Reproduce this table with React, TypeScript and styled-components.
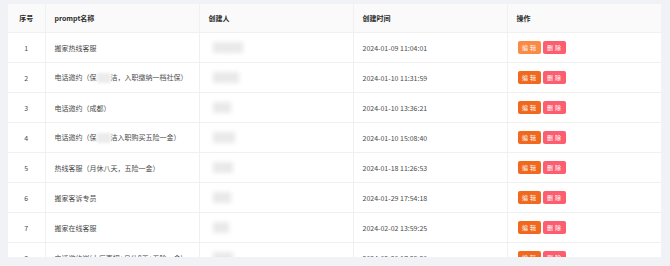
import styled, { createGlobalStyle } from "styled-components";

interface PromptRow {
  id: number;
  name: string;
  redactAt?: number;
  createdAt: string;
  creatorWidth: number;
}

const rows: PromptRow[] = [
  { id: 1, name: "搬家热线客服", createdAt: "2024-01-09 11:04:01", creatorWidth: 30 },
  { id: 2, name: "电话邀约（保洁，入职缴纳一档社保）", redactAt: 6, createdAt: "2024-01-10 11:31:59", creatorWidth: 26 },
  { id: 3, name: "电话邀约（成都）", createdAt: "2024-01-10 13:36:21", creatorWidth: 18 },
  { id: 4, name: "电话邀约（保洁入职购买五险一金）", redactAt: 6, createdAt: "2024-01-10 15:08:40", creatorWidth: 22 },
  { id: 5, name: "热线客服（月休八天，五险一金）", createdAt: "2024-01-18 11:26:53", creatorWidth: 20 },
  { id: 6, name: "搬家客诉专员", createdAt: "2024-01-29 17:54:18", creatorWidth: 18 },
  { id: 7, name: "搬家在线客服", createdAt: "2024-02-02 13:59:25", creatorWidth: 16 },
  { id: 8, name: "电话邀约岗(大厂直招+月休8天+五险一金)", createdAt: "2024-02-20 17:29:20", creatorWidth: 20 },
];

const GlobalStyle = createGlobalStyle`
  html, body {
    margin: 0;
    padding: 0;
    background: #f1f2f6;
  }
  body {
    font-family: "Noto Sans CJK SC", "Noto Sans", "Liberation Sans", sans-serif;
  }
`;

const Page = styled.div`
  height: 266px;
  padding: 4px 9px 0 8px;
  box-sizing: border-box;
  overflow: hidden;
`;

const TableWrap = styled.div`
  background: #ffffff;
  height: 253px;
  overflow: hidden;
`;

const Table = styled.table`
  width: 653px;
  border-collapse: collapse;
  table-layout: fixed;
`;

const HeadCell = styled.th<{ $center?: boolean }>`
  height: 28px;
  padding: 0 0 0 9px;
  background: #fafafa;
  color: #2b2b2b;
  font-size: 7px;
  font-weight: 700;
  text-align: ${(p) => (p.$center ? "center" : "left")};
  border-bottom: 1px solid #f0f0f0;
  border-right: 1px solid #f0f0f0;
  ${(p) => p.$center && "padding: 0;"}

  &:last-child {
    border-right: none;
  }
`;

const Cell = styled.td<{ $center?: boolean }>`
  height: 29px;
  padding: 0 0 0 9px;
  color: #4a4a4a;
  font-size: 7px;
  white-space: nowrap;
  text-align: ${(p) => (p.$center ? "center" : "left")};
  border-bottom: 1px solid #f0f0f0;
  border-right: 1px solid #f0f0f0;
  ${(p) => p.$center && "padding: 0;"}

  &:last-child {
    border-right: none;
  }
`;

const Redact = styled.span<{ $w: number }>`
  display: inline-block;
  width: ${(p) => p.$w}px;
  height: 10px;
  vertical-align: middle;
  background: #ececec;
  filter: blur(1.5px);
`;

const CreatorBlur = styled.span<{ $w: number }>`
  display: block;
  width: ${(p) => p.$w}px;
  height: 11px;
  margin-left: 4px;
  background: #e9e9e9;
  filter: blur(2px);
`;

const Actions = styled.div`
  display: flex;
  gap: 2px;
  padding-left: 1px;
`;

const ActionButton = styled.button<{ $tone: "edit" | "editLight" | "delete" }>`
  width: 23px;
  height: 13px;
  padding: 0;
  border: none;
  border-radius: 2px;
  color: #ffffff;
  font-family: inherit;
  font-size: 6px;
  letter-spacing: 2px;
  text-indent: 2px;
  line-height: 13px;
  cursor: pointer;
  background: ${(p) =>
    p.$tone === "edit" ? "#f0691f" : p.$tone === "editLight" ? "#fb8a45" : "#fd5e6f"};
`;

const App = () => {
  return (
    <>
      <GlobalStyle />
      <Page>
        <TableWrap>
          <Table>
            <colgroup>
              <col style={{ width: 37 }} />
              <col style={{ width: 154 }} />
              <col style={{ width: 154 }} />
              <col style={{ width: 154 }} />
              <col style={{ width: 154 }} />
            </colgroup>
            <thead>
              <tr>
                <HeadCell $center>序号</HeadCell>
                <HeadCell>prompt名称</HeadCell>
                <HeadCell>创建人</HeadCell>
                <HeadCell>创建时间</HeadCell>
                <HeadCell>操作</HeadCell>
              </tr>
            </thead>
            <tbody>
              {rows.map((row) => (
                <tr key={row.id}>
                  <Cell $center>{row.id}</Cell>
                  <Cell>
                    {row.redactAt ? (
                      <>
                        {row.name.slice(0, row.redactAt)}
                        <Redact $w={14} />
                        {row.name.slice(row.redactAt)}
                      </>
                    ) : (
                      row.name
                    )}
                  </Cell>
                  <Cell>
                    <CreatorBlur $w={row.creatorWidth} />
                  </Cell>
                  <Cell>{row.createdAt}</Cell>
                  <Cell>
                    <Actions>
                      <ActionButton $tone={row.id === 1 ? "editLight" : "edit"}>编辑</ActionButton>
                      <ActionButton $tone="delete">删除</ActionButton>
                    </Actions>
                  </Cell>
                </tr>
              ))}
            </tbody>
          </Table>
        </TableWrap>
      </Page>
    </>
  );
};

export default App;
